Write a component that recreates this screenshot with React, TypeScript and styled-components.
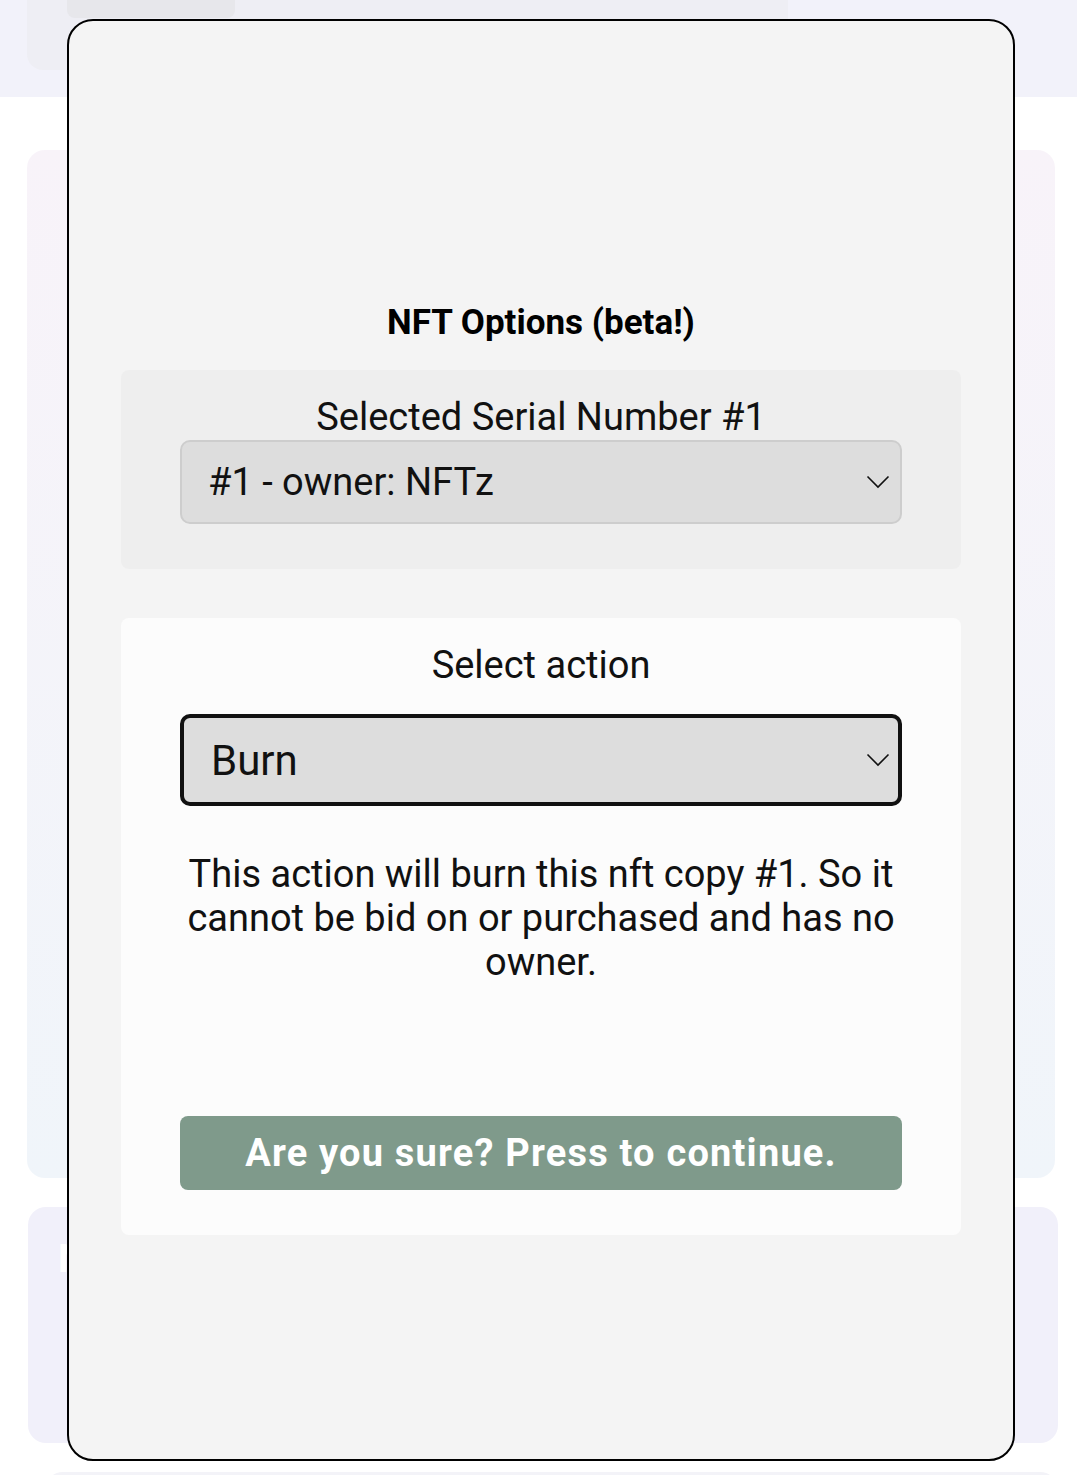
import React from 'react';
import styled, { createGlobalStyle } from 'styled-components';

const GlobalStyle = createGlobalStyle`
  html, body {
    margin: 0;
    padding: 0;
    background: #ffffff;
    font-family: Roboto, "Liberation Sans", sans-serif;
    color: #111;
  }
  * { box-sizing: border-box; }
`;

// ---- page behind the modal ----
const Page = styled.div`
  width: 1077px;
  height: 1475px;
  overflow: hidden;
  display: flex;
  flex-direction: column;
`;

const TopBand = styled.header`
  height: 97px;
  flex-shrink: 0;
  background: #f2f2fa;
  padding-left: 27px;
  display: flex;
  align-items: flex-start;
`;

const TopCard = styled.div`
  width: 761px;
  height: 70px;
  background: #eeeef4;
  border-radius: 0 0 16px 16px;
  padding-left: 40px;
`;

const FadedImage = styled.div`
  width: 168px;
  height: 18px;
  background: #e7e7eb;
  border-radius: 0 0 8px 8px;
`;

const BgCard = styled.section<{ $top: number; $left: number; $right: number; $height: number; $bg: string }>`
  margin: ${({ $top, $left, $right }) => `${$top}px ${$right}px 0 ${$left}px`};
  height: ${({ $height }) => $height}px;
  flex-shrink: 0;
  background: ${({ $bg }) => $bg};
  border-radius: 18px;
  padding: 30px 30px;
`;

const BgCardTitle = styled.h2`
  margin: 0;
  color: #ffffff;
  font-size: 38px;
  font-weight: 700;
`;

// ---- modal ----
const Modal = styled.div`
  position: fixed;
  left: 67px;
  top: 19px;
  width: 948px;
  height: 1442px;
  background: #f4f4f4;
  border: 2px solid #000;
  border-radius: 26px;
  display: flex;
  flex-direction: column;
  align-items: center;
  padding: 280px 52px 0 52px;
`;

const Title = styled.h1`
  margin: 0;
  font-size: 35px;
  line-height: 44px;
  font-weight: 700;
  color: #000;
`;

const Section = styled.div<{ $bg: string; $mt: number }>`
  margin-top: ${({ $mt }) => $mt}px;
  width: 840px;
  background: ${({ $bg }) => $bg};
  border-radius: 8px;
  padding: 25px 59px 45px;
  display: flex;
  flex-direction: column;
  align-items: center;
`;

const Label = styled.div`
  font-size: 38px;
  line-height: 44px;
  color: #111;
  text-align: center;
`;

const SelectWrap = styled.div<{ $mt: number }>`
  position: relative;
  width: 722px;
  margin-top: ${({ $mt }) => $mt}px;
`;

const Select = styled.select<{ $focused?: boolean }>`
  appearance: none;
  -webkit-appearance: none;
  width: 100%;
  height: ${({ $focused }) => ($focused ? 92 : 84)}px;
  background: #dddddd;
  border: ${({ $focused }) => ($focused ? '4px solid #111' : '2px solid #cdcdcd')};
  border-radius: 10px;
  padding: ${({ $focused }) => ($focused ? '0 0 0 27px' : '0 0 0 26px')};
  font-family: Roboto, "Liberation Sans", sans-serif;
  font-size: ${({ $focused }) => ($focused ? 42 : 38)}px;
  color: #111;
  outline: none;
`;

const Chevron = styled.svg`
  position: absolute;
  right: 12px;
  top: 50%;
  transform: translateY(-50%);
  pointer-events: none;
`;

const Description = styled.p`
  margin: 46px 0 0;
  font-size: 38px;
  line-height: 44px;
  text-align: center;
  color: #111;
`;

const ContinueButton = styled.button`
  margin-top: 132px;
  width: 722px;
  height: 74px;
  border: none;
  border-radius: 8px;
  background: #7f9a8b;
  color: #ffffff;
  font-family: Roboto, "Liberation Sans", sans-serif;
  font-size: 38px;
  font-weight: 700;
  letter-spacing: 1.2px;
  cursor: pointer;
`;

const ChevronIcon = () => (
  <Chevron width="24" height="14" viewBox="0 0 24 14">
    <path d="M1.5 1.5 L12 12 L22.5 1.5" fill="none" stroke="#111" strokeWidth="1.6" />
  </Chevron>
);

export default function App() {
  return (
    <>
      <GlobalStyle />
      <Page>
        <TopBand>
          <TopCard>
            <FadedImage />
          </TopCard>
        </TopBand>
        <BgCard $top={53} $left={27} $right={22} $height={1028} $bg="linear-gradient(180deg, #f8f3f9 0%, #f0f5fa 100%)" />
        <BgCard $top={29} $left={28} $right={19} $height={236} $bg="#f1f0fa">
          <BgCardTitle>NFT</BgCardTitle>
        </BgCard>
        <BgCard $top={29} $left={45} $right={19} $height={200} $bg="#f3f3f8" />
      </Page>

      <Modal>
        <Title>NFT Options (beta!)</Title>

        <Section $bg="#eeeeee" $mt={25}>
          <Label>Selected Serial Number #1</Label>
          <SelectWrap $mt={1}>
            <Select defaultValue="1">
              <option value="1">#1 - owner: NFTz</option>
            </Select>
            <ChevronIcon />
          </SelectWrap>
        </Section>

        <Section $bg="#fcfcfc" $mt={49}>
          <Label>Select action</Label>
          <SelectWrap $mt={27}>
            <Select $focused defaultValue="burn">
              <option value="burn">Burn</option>
            </Select>
            <ChevronIcon />
          </SelectWrap>
          <Description>
            This action will burn this nft copy #1. So it cannot be bid on or purchased and has no owner.
          </Description>
          <ContinueButton>Are you sure? Press to continue.</ContinueButton>
        </Section>
      </Modal>
    </>
  );
}
